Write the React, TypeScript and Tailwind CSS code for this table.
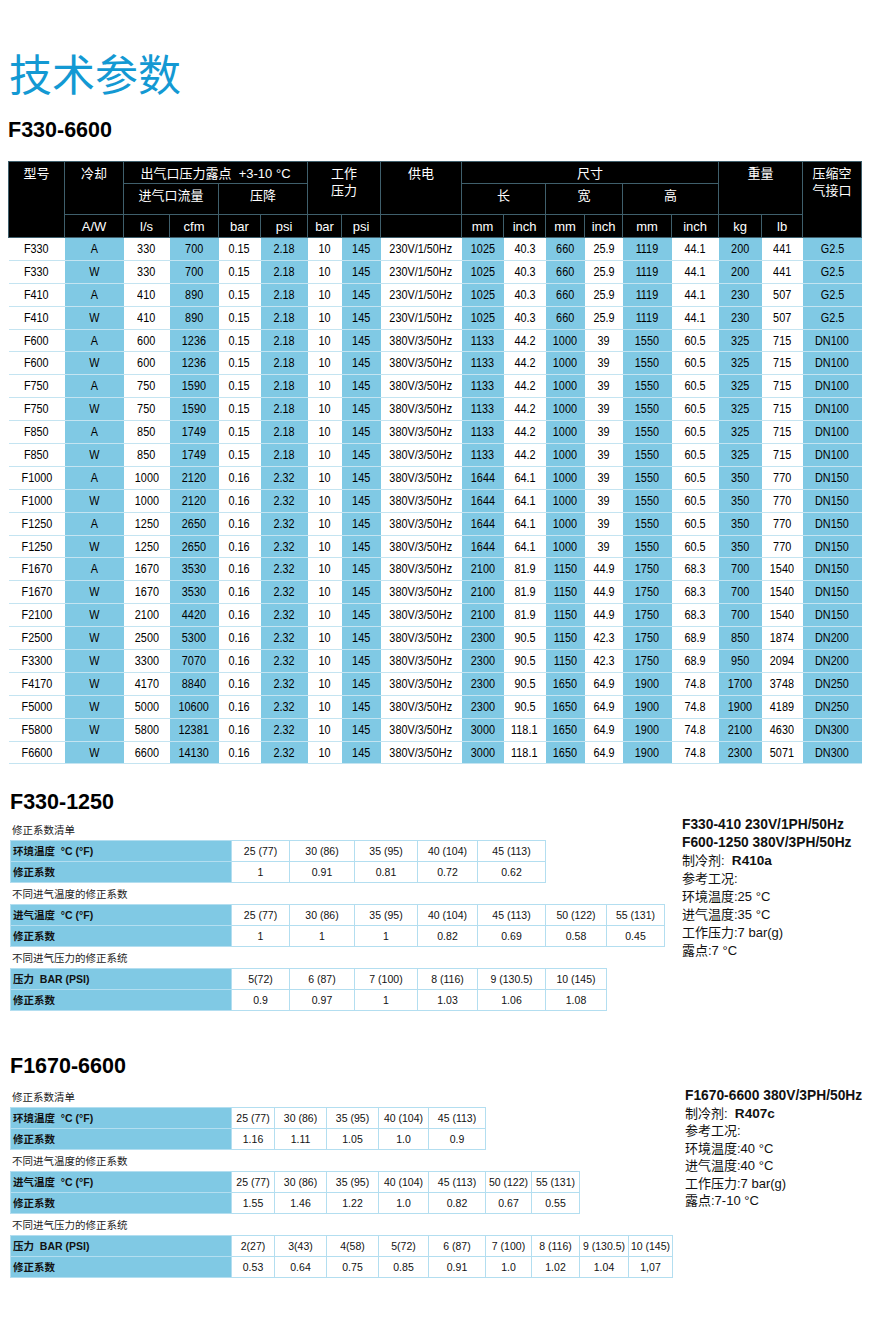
import React from 'react';

const SANS = "'Liberation Sans','Noto Sans CJK SC',sans-serif";
const CJK = "'Liberation Sans','Noto Sans CJK SC',sans-serif";

const mainCols = [56, 59, 46, 49, 42, 47, 34, 39, 81, 42, 42, 39, 38, 49, 47, 43, 41, 59];

const A = (m: string, aw: string, ls: string, cfm: string, bar: string, psi: string, pw: string, l: string, li: string, w: string, wi: string, h: string, hi: string, kg: string, lb: string, c: string) =>
  [m, aw, ls, cfm, bar, psi, '10', '145', pw, l, li, w, wi, h, hi, kg, lb, c];

const P1 = '230V/1/50Hz';
const P3 = '380V/3/50Hz';

const rows: string[][] = [
  A('F330', 'A', '330', '700', '0.15', '2.18', P1, '1025', '40.3', '660', '25.9', '1119', '44.1', '200', '441', 'G2.5'),
  A('F330', 'W', '330', '700', '0.15', '2.18', P1, '1025', '40.3', '660', '25.9', '1119', '44.1', '200', '441', 'G2.5'),
  A('F410', 'A', '410', '890', '0.15', '2.18', P1, '1025', '40.3', '660', '25.9', '1119', '44.1', '230', '507', 'G2.5'),
  A('F410', 'W', '410', '890', '0.15', '2.18', P1, '1025', '40.3', '660', '25.9', '1119', '44.1', '230', '507', 'G2.5'),
  A('F600', 'A', '600', '1236', '0.15', '2.18', P3, '1133', '44.2', '1000', '39', '1550', '60.5', '325', '715', 'DN100'),
  A('F600', 'W', '600', '1236', '0.15', '2.18', P3, '1133', '44.2', '1000', '39', '1550', '60.5', '325', '715', 'DN100'),
  A('F750', 'A', '750', '1590', '0.15', '2.18', P3, '1133', '44.2', '1000', '39', '1550', '60.5', '325', '715', 'DN100'),
  A('F750', 'W', '750', '1590', '0.15', '2.18', P3, '1133', '44.2', '1000', '39', '1550', '60.5', '325', '715', 'DN100'),
  A('F850', 'A', '850', '1749', '0.15', '2.18', P3, '1133', '44.2', '1000', '39', '1550', '60.5', '325', '715', 'DN100'),
  A('F850', 'W', '850', '1749', '0.15', '2.18', P3, '1133', '44.2', '1000', '39', '1550', '60.5', '325', '715', 'DN100'),
  A('F1000', 'A', '1000', '2120', '0.16', '2.32', P3, '1644', '64.1', '1000', '39', '1550', '60.5', '350', '770', 'DN150'),
  A('F1000', 'W', '1000', '2120', '0.16', '2.32', P3, '1644', '64.1', '1000', '39', '1550', '60.5', '350', '770', 'DN150'),
  A('F1250', 'A', '1250', '2650', '0.16', '2.32', P3, '1644', '64.1', '1000', '39', '1550', '60.5', '350', '770', 'DN150'),
  A('F1250', 'W', '1250', '2650', '0.16', '2.32', P3, '1644', '64.1', '1000', '39', '1550', '60.5', '350', '770', 'DN150'),
  A('F1670', 'A', '1670', '3530', '0.16', '2.32', P3, '2100', '81.9', '1150', '44.9', '1750', '68.3', '700', '1540', 'DN150'),
  A('F1670', 'W', '1670', '3530', '0.16', '2.32', P3, '2100', '81.9', '1150', '44.9', '1750', '68.3', '700', '1540', 'DN150'),
  A('F2100', 'W', '2100', '4420', '0.16', '2.32', P3, '2100', '81.9', '1150', '44.9', '1750', '68.3', '700', '1540', 'DN150'),
  A('F2500', 'W', '2500', '5300', '0.16', '2.32', P3, '2300', '90.5', '1150', '42.3', '1750', '68.9', '850', '1874', 'DN200'),
  A('F3300', 'W', '3300', '7070', '0.16', '2.32', P3, '2300', '90.5', '1150', '42.3', '1750', '68.9', '950', '2094', 'DN200'),
  A('F4170', 'W', '4170', '8840', '0.16', '2.32', P3, '2300', '90.5', '1650', '64.9', '1900', '74.8', '1700', '3748', 'DN250'),
  A('F5000', 'W', '5000', '10600', '0.16', '2.32', P3, '2300', '90.5', '1650', '64.9', '1900', '74.8', '1900', '4189', 'DN250'),
  A('F5800', 'W', '5800', '12381', '0.16', '2.32', P3, '3000', '118.1', '1650', '64.9', '1900', '74.8', '2100', '4630', 'DN300'),
  A('F6600', 'W', '6600', '14130', '0.16', '2.32', P3, '3000', '118.1', '1650', '64.9', '1900', '74.8', '2300', '5071', 'DN300'),
];

const H = 'border border-[#3f5f6c] text-white font-normal align-top pt-[3px] leading-[17px]';
const H3 = 'border border-[#3f5f6c] text-white font-normal align-middle leading-[17px]';

function MainTable() {
  return (
    <table
      className="ml-[8px] table-fixed border-collapse text-[13px]"
      style={{ width: 853, fontFamily: SANS }}
    >
      <colgroup>
        {mainCols.map((w, i) => (
          <col key={i} style={{ width: w }} />
        ))}
      </colgroup>
      <thead className="bg-black">
        <tr className="h-[22px]">
          <th rowSpan={3} className={H}>型号</th>
          <th rowSpan={2} className={H}>冷却</th>
          <th colSpan={4} className={H}>出气口压力露点&nbsp; +3-10 °C</th>
          <th colSpan={2} rowSpan={2} className={H}>工作<br />压力</th>
          <th rowSpan={2} className={H}>供电</th>
          <th colSpan={6} className={H}>尺寸</th>
          <th colSpan={2} rowSpan={2} className={H}>重量</th>
          <th rowSpan={3} className={H}>压缩空<br />气接口</th>
        </tr>
        <tr className="h-[31px]">
          <th colSpan={2} className={H}>进气口流量</th>
          <th colSpan={2} className={H}>压降</th>
          <th colSpan={2} className={H}>长</th>
          <th colSpan={2} className={H}>宽</th>
          <th colSpan={2} className={H}>高</th>
        </tr>
        <tr className="h-[23px]">
          {['A/W', 'l/s', 'cfm', 'bar', 'psi', 'bar', 'psi', '', 'mm', 'inch', 'mm', 'inch', 'mm', 'inch', 'kg', 'lb'].map((t, i) => (
            <th key={i} className={H3}>{t}</th>
          ))}
        </tr>
      </thead>
      <tbody>
        {rows.map((r, ri) => (
          <tr key={ri} className="h-[22.9px]">
            {r.map((c, ci) => (
              <td
                key={ci}
                className={
                  'text-center align-middle p-0 leading-[16px] text-[13.4px] text-black border-b border-[#c4e4f1] whitespace-nowrap overflow-visible ' +
                  (ci % 2 === 1 ? 'bg-[#80c9e4]' : 'bg-white')
                }
              >
                <span className="inline-block scale-x-[0.81] origin-center">{c}</span>
              </td>
            ))}
          </tr>
        ))}
      </tbody>
    </table>
  );
}

type Tbl = { label: string; values: string[] }[];

function Sub({ children }: { children: React.ReactNode }) {
  return (
    <div className="pt-[3px] pl-[2px] h-[16px] leading-[16px] text-[10.5px] text-[#222] mb-[2px] box-content" style={{ fontFamily: CJK }}>
      {children}
    </div>
  );
}

function CoefTable({ data, cols }: { data: Tbl; cols: number[] }) {
  const n = data[0].values.length;
  const widths = cols.slice(0, n);
  const total = 221 + widths.reduce((a, b) => a + b, 0);
  return (
    <table className="table-fixed border-collapse" style={{ width: total, fontFamily: CJK }}>
      <colgroup>
        <col style={{ width: 221 }} />
        {widths.map((w, i) => (
          <col key={i} style={{ width: w }} />
        ))}
      </colgroup>
      <tbody>
        {data.map((row, ri) => (
          <tr key={ri} className="h-[21px]">
            <td className="bg-[#80c9e4] border border-[#b3def0] pl-[2px] p-0 text-left text-[10.5px] font-bold text-[#111] leading-[14px] align-middle whitespace-pre">
              {row.label}
            </td>
            {row.values.map((v, vi) => (
              <td key={vi} className="border border-[#b3def0] p-0 text-center text-[10.5px] text-[#111] leading-[14px] align-middle whitespace-nowrap">
                {v}
              </td>
            ))}
          </tr>
        ))}
      </tbody>
    </table>
  );
}

const s1Cols = [58, 65, 63, 60, 68, 61, 58];
const s2Cols = [43, 52, 52, 50, 57, 46, 48, 49, 44];

const s1t1: Tbl = [
  { label: '环境温度  °C (°F)', values: ['25 (77)', '30 (86)', '35 (95)', '40 (104)', '45 (113)'] },
  { label: '修正系数', values: ['1', '0.91', '0.81', '0.72', '0.62'] },
];
const s1t2: Tbl = [
  { label: '进气温度  °C (°F)', values: ['25 (77)', '30 (86)', '35 (95)', '40 (104)', '45 (113)', '50 (122)', '55 (131)'] },
  { label: '修正系数', values: ['1', '1', '1', '0.82', '0.69', '0.58', '0.45'] },
];
const s1t3: Tbl = [
  { label: '压力  BAR (PSI)', values: ['5(72)', '6 (87)', '7 (100)', '8 (116)', '9 (130.5)', '10 (145)'] },
  { label: '修正系数', values: ['0.9', '0.97', '1', '1.03', '1.06', '1.08'] },
];
const s2t1: Tbl = [
  { label: '环境温度  °C (°F)', values: ['25 (77)', '30 (86)', '35 (95)', '40 (104)', '45 (113)'] },
  { label: '修正系数', values: ['1.16', '1.11', '1.05', '1.0', '0.9'] },
];
const s2t2: Tbl = [
  { label: '进气温度  °C (°F)', values: ['25 (77)', '30 (86)', '35 (95)', '40 (104)', '45 (113)', '50 (122)', '55 (131)'] },
  { label: '修正系数', values: ['1.55', '1.46', '1.22', '1.0', '0.82', '0.67', '0.55'] },
];
const s2t3: Tbl = [
  { label: '压力  BAR (PSI)', values: ['2(27)', '3(43)', '4(58)', '5(72)', '6 (87)', '7 (100)', '8 (116)', '9 (130.5)', '10 (145)'] },
  { label: '修正系数', values: ['0.53', '0.64', '0.75', '0.85', '0.91', '1.0', '1.02', '1.04', '1,07'] },
];

function Heading({ children }: { children: React.ReactNode }) {
  return (
    <div className="h-[24px] leading-[24px] text-[21.5px] font-bold text-black" style={{ fontFamily: SANS }}>
      {children}
    </div>
  );
}

function Info({ lines, lh }: { lines: React.ReactNode[]; lh: string }) {
  return (
    <div className={'text-[13px] text-[#111] ' + lh} style={{ fontFamily: CJK }}>
      {lines.map((l, i) => (
        <div key={i} className="whitespace-nowrap">{l}</div>
      ))}
    </div>
  );
}

export default function App() {
  return (
    <div className="w-[870px] h-[1322px] bg-white overflow-hidden" style={{ fontFamily: SANS }}>
      <div
        className="pt-[48px] pl-[9px] h-[96px] box-border leading-[48px] text-[43px] text-[#1399d3]"
        style={{ fontFamily: "'Noto Sans CJK SC',sans-serif" }}
      >
        技术参数
      </div>
      <div className="mt-[22px] pl-[8px]">
        <Heading>F330-6600</Heading>
      </div>
      <div className="mt-[19px]">
        <MainTable />
      </div>

      {/* Section 1 */}
      <div className="mt-[26px] flex">
        <div className="ml-[10px] w-[654px] shrink-0">
          <Heading>F330-1250</Heading>
          <div className="mt-[5px]">
            <Sub>修正系数清单</Sub>
            <CoefTable data={s1t1} cols={s1Cols} />
            <Sub>不同进气温度的修正系数</Sub>
            <CoefTable data={s1t2} cols={s1Cols} />
            <Sub>不同进气压力的修正系统</Sub>
            <CoefTable data={s1t3} cols={s1Cols} />
          </div>
        </div>
        <div className="ml-[18px] mt-[26px]">
          <Info
            lh="leading-[18px]"
            lines={[
              <b key="a" className="font-bold text-[13.8px]">F330-410 230V/1PH/50Hz</b>,
              <b key="b" className="font-bold text-[13.8px]">F600-1250 380V/3PH/50Hz</b>,
              <span key="c">制冷剂:&nbsp; <b className="font-bold text-[13.6px]">R410a</b></span>,
              '参考工况:',
              '环境温度:25 °C',
              '进气温度:35 °C',
              '工作压力:7 bar(g)',
              '露点:7 °C',
            ]}
          />
        </div>
      </div>

      {/* Section 2 */}
      <div className="mt-[43px] flex">
        <div className="ml-[10px] w-[662px] shrink-0">
          <Heading>F1670-6600</Heading>
          <div className="mt-[8px]">
            <Sub>修正系数清单</Sub>
            <CoefTable data={s2t1} cols={s2Cols} />
            <Sub>不同进气温度的修正系数</Sub>
            <CoefTable data={s2t2} cols={s2Cols} />
            <Sub>不同进气压力的修正系统</Sub>
            <CoefTable data={s2t3} cols={s2Cols} />
          </div>
        </div>
        <div className="ml-[13px] mt-[33px]">
          <Info
            lh="leading-[17.5px]"
            lines={[
              <b key="a" className="font-bold text-[13.8px]">F1670-6600 380V/3PH/50Hz</b>,
              <span key="c">制冷剂:&nbsp; <b className="font-bold text-[13.6px]">R407c</b></span>,
              '参考工况:',
              '环境温度:40 °C',
              '进气温度:40 °C',
              '工作压力:7 bar(g)',
              '露点:7-10 °C',
            ]}
          />
        </div>
      </div>
    </div>
  );
}
